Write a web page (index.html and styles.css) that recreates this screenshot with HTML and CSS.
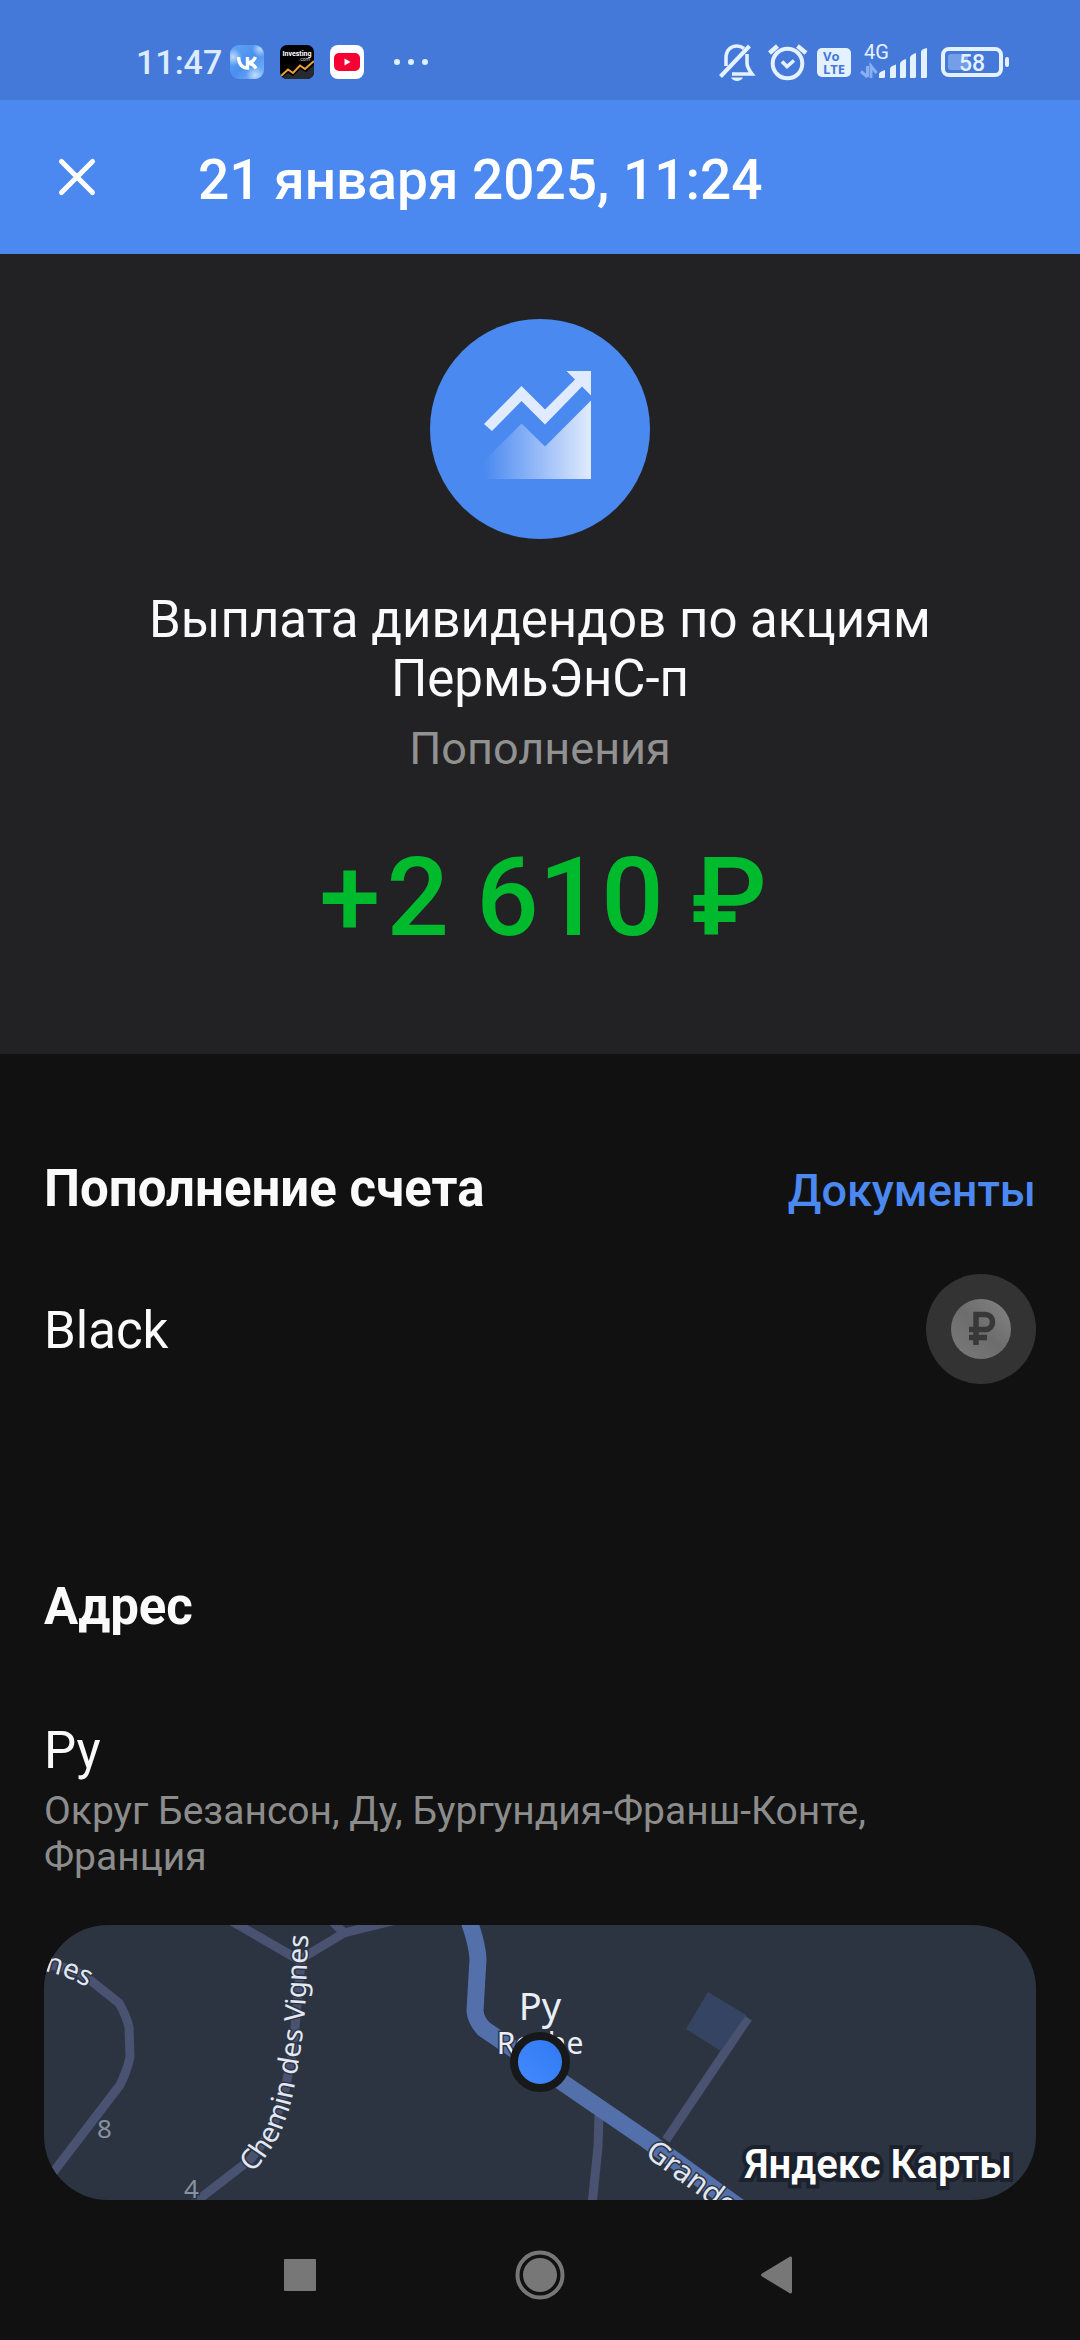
FILE: index.html
```html
<!DOCTYPE html>
<html lang="ru">
<head>
<meta charset="utf-8">
<meta name="viewport" content="width=device-width, initial-scale=1">
<title>Выплата дивидендов</title>
<link rel="stylesheet" href="styles.css">
</head>
<body>
<div class="status">
  <div class="status-left">
    <span class="clock">11:47</span>
    <svg class="app-icon" width="34" height="34" viewBox="0 0 34 34" aria-label="VK">
      <defs>
        <linearGradient id="sky" x1="0" y1="0" x2="1" y2="1"><stop offset="0" stop-color="#62a6f5"/><stop offset=".5" stop-color="#4a8fee"/><stop offset="1" stop-color="#7db8fa"/></linearGradient>
        <radialGradient id="cloud"><stop offset="0" stop-color="#d5e9ff" stop-opacity=".8"/><stop offset="1" stop-color="#d5e9ff" stop-opacity="0"/></radialGradient>
        <clipPath id="vkClip"><rect width="34" height="34" rx="9"/></clipPath>
      </defs>
      <g clip-path="url(#vkClip)">
        <rect width="34" height="34" fill="url(#sky)"/>
        <circle cx="3" cy="12" r="9" fill="url(#cloud)"/>
        <circle cx="25" cy="30" r="9" fill="url(#cloud)"/>
        <circle cx="30" cy="4" r="8" fill="url(#cloud)"/>
      </g>
      <path d="M8.500 12C9 19 12 23 17.500 23V12M25.500 12C24 15.500 21.500 17.500 17.500 18C22 18.500 24.500 20.500 26 23.500" fill="none" stroke="#fff" stroke-width="3.400"/>
    </svg>
    <svg class="app-icon" width="34" height="34" viewBox="0 0 34 34" aria-label="Investing">
      <clipPath id="invClip"><rect width="34" height="34" rx="7"/></clipPath>
      <g clip-path="url(#invClip)">
        <rect width="34" height="34" fill="#000"/>
        <path d="M0 34L8 28L13 31L20 24L26 27L34 20V34Z" fill="#252b2e"/>
        <path d="M1 31L8 24.500L13 28L20 20.500L25 24L34 16" fill="none" stroke="#e9a13b" stroke-width="2"/>
      </g>
      <text class="inv-name" x="17" y="11" text-anchor="middle">Investing</text>
      <text class="inv-com" x="30" y="16" text-anchor="end">.com</text>
    </svg>
    <svg class="app-icon" width="34" height="34" viewBox="0 0 34 34" aria-label="YouTube">
      <rect width="34" height="34" rx="8" fill="#fff"/><rect x="4" y="8" width="26" height="18" rx="5" fill="#f60033"/><path d="M14.500 13.500V20.500L20.500 17Z" fill="#fff"/>
    </svg>
    <svg class="more" width="34" height="8" viewBox="0 0 34 8"><g fill="#dcf0ff"><circle cx="3" cy="4" r="3"/><circle cx="17" cy="4" r="3"/><circle cx="31" cy="4" r="3"/></g></svg>
  </div>
  <svg class="status-right" width="292" height="40" viewBox="718 42 292 40" aria-label="4G, 58%">
    <g fill="none" stroke="#e4f1ff" stroke-width="3.600">
      <path d="M726 66V58C726 50 731 46 737 46C739.500 46 742 47 744 48.500"/>
      <path d="M747 54V63C747 67 749 70 752 74H732"/>
      <path d="M749.500 46L720.500 76.500" stroke-width="4"/>
      <circle cx="787.500" cy="63.500" r="14.800" stroke-width="4"/>
      <path d="M782 61.500L787 66.500L794 60.500"/>
      <path d="M769.500 53L777.500 46M806 53L797.500 46" stroke-width="4.400"/>
      <rect x="943" y="49" width="58" height="26" rx="6" stroke-width="4"/>
    </g>
    <path d="M731 77.500H743C741 82 733 82 731 77.500Z" fill="#e4f1ff"/>
    <rect x="817" y="48" width="34" height="29" rx="5" fill="#e4f1ff"/>
    <text class="volte" x="823" y="61">Vo</text>
    <text class="volte" x="823" y="74">LTE</text>
    <text class="net" x="864" y="59">4G</text>
    <path d="M867.500 66V77M861 71.500L867.500 77M871 78V66L876.500 73" fill="none" stroke="#88aff0" stroke-width="3"/>
    <g fill="#e4f1ff">
      <path d="M879 78V74Q879 72 885 70V77Q885 78 883.500 78Z"/>
      <path d="M890 78V68.500Q890 66.500 896 64.500V76.500Q896 78 894.500 78Z"/>
      <path d="M900 78V64Q900 61 906 59V76.500Q906 78 904.500 78Z"/>
      <path d="M910 78V58Q910 55 916 53V76.500Q916 78 914.500 78Z"/>
      <path d="M921 78V52Q921 49 927 48V76.500Q927 78 925.500 78Z"/>
      <rect x="1005" y="57" width="4" height="10" rx="2"/>
    </g>
    <rect x="948" y="54" width="20" height="16" rx="3" fill="#759ee9"/>
    <text class="charge" x="972" y="71" text-anchor="middle">58</text>
  </svg>
</div>

<header class="topbar">
  <button class="close" aria-label="Закрыть"><svg width="40" height="40" viewBox="0 0 40 40"><path d="M4.500 4.500L35.500 35.500M35.500 4.500L4.500 35.500" stroke="#fff" stroke-width="5" stroke-linecap="round"/></svg></button>
  <h1 class="date">21 января 2025, 11:24</h1>
</header>

<section class="hero">
  <svg class="logo" width="220" height="220" viewBox="430 319 220 220">
    <defs><linearGradient id="fade" x1="0" x2="1" y1="0" y2="0"><stop offset="0" stop-color="#e1ebff" stop-opacity="0"/><stop offset="1" stop-color="#e1ebff"/></linearGradient></defs>
    <circle cx="540" cy="429" r="110" fill="#4a89f0"/>
    <path d="M484 424L521.500 386L545 409.500L575 379.500L566.500 371H591V395.500L582 386.500L545 424.500L521.500 401L492 431Z" fill="#e1ebff"/>
    <path d="M484 461L521.500 423.500L545 446.500L591 400.500V479H484Z" fill="url(#fade)"/>
  </svg>
  <h2 class="operation">Выплата дивидендов по акциям ПермьЭнС-п</h2>
  <p class="category">Пополнения</p>
  <p class="amount"><span class="sign">+</span>2&nbsp;610&nbsp;₽</p>
</section>

<main class="details">
  <section>
    <div class="section-head">
      <h3 class="section-title">Пополнение счета</h3>
      <a class="docs" href="#documents">Документы</a>
    </div>
    <div class="account">
      <span class="row-title account-name">Black</span>
      <svg width="110" height="110" viewBox="0 0 110 110" aria-label="Рублёвый счёт">
        <defs><linearGradient id="coin" x1="0" y1="1" x2="1" y2="0"><stop offset="0" stop-color="#7a7a7a"/><stop offset=".5" stop-color="#6d6d6d"/><stop offset="1" stop-color="#848484"/></linearGradient></defs>
        <circle cx="55" cy="55" r="55" fill="#333"/><circle cx="55" cy="55" r="30" fill="url(#coin)"/>
        <path d="M50 71V40.500H59C63.500 40.500 66.500 43.500 66.500 48C66.500 52.500 63.500 55.500 59 55.500H43M43 63.500H61" fill="none" stroke="#383838" stroke-width="5.500"/>
      </svg>
    </div>
  </section>
  <section class="address">
    <h3 class="section-title">Адрес</h3>
    <p class="row-title place">Ру</p>
    <p class="place-detail">Округ Безансон, Ду, Бургундия-Франш-Конте, Франция</p>
    <div class="map">
      <svg class="map-canvas" viewBox="0 0 992 275" preserveAspectRatio="xMidYMid slice">
        <defs>
          <path id="pathChemin" d="M208 248C231 224 243 198 249 168S260 105 261.500 75L265 -5"/>
          <path id="pathGrande" d="M600 230L706 308"/>
          <path id="pathNes" d="M0 46Q21 50 47 64"/>
          <linearGradient id="dot" x1="0" y1="1" x2="1" y2="0"><stop offset="0" stop-color="#468bff"/><stop offset="1" stop-color="#2d78f0"/></linearGradient>
        </defs>
        <g class="road">
          <path d="M4 40Q30 42 46 55L75 78Q82 90 85 102L86 132Q83 146 76 160L-2 262"/>
          <path d="M184 -6L255 35L300 8L356 -6M286 -6L300 8"/>
          <path d="M257 36L253 80L249 125L241 165L228 205L207 234L150 278"/>
          <path d="M704 93L622 215M555 190L554 222L548 280"/>
        </g>
        <path class="plot" d="M664 67L702 90L677 126L642 104Z"/>
        <path class="main-road" d="M425 -4Q433 18 434 34L431 86Q432 96 440 104L496 142L604 216L706 290"/>
        <g class="street">
          <text><textPath href="#pathChemin">Chemin des Vignes</textPath></text>
          <text class="street-main"><textPath href="#pathGrande">Grande</textPath></text>
          <text><textPath href="#pathNes">nes</textPath></text>
        </g>
        <text class="house" x="53" y="213">8</text>
        <text class="house" x="140" y="273">4</text>
        <text class="town" x="496" y="95" text-anchor="middle">Ру</text>
        <text class="town-small" x="496" y="129" text-anchor="middle">Roche</text>
        <circle cx="496" cy="137" r="26" fill="url(#dot)" stroke="#17181a" stroke-width="8"/>
      </svg>
      <a class="map-brand" href="#map">Яндекс Карты</a>
    </div>
  </section>
</main>

<nav class="sysnav">
  <button aria-label="Недавние"><svg width="50" height="50" viewBox="0 0 50 50"><rect x="9" y="9" width="32" height="32" rx="1" fill="#777"/></svg></button>
  <button aria-label="Домой"><svg width="50" height="50" viewBox="0 0 50 50"><circle cx="25" cy="25" r="22.500" fill="none" stroke="#777" stroke-width="4"/><circle cx="25" cy="25" r="17" fill="#777"/></svg></button>
  <button aria-label="Назад"><svg width="50" height="50" viewBox="0 0 50 50"><path d="M7.500 25L35.500 8V42Z" fill="#777" stroke="#777" stroke-width="3" stroke-linejoin="round"/></svg></button>
</nav>
</body>
</html>
```
FILE: styles.css
```css
* { box-sizing: border-box; margin: 0; padding: 0; }
body {
  min-height: 100vh;
  display: flex;
  flex-direction: column;
  background: #111;
  color: #fafafa;
  font-family: Roboto, "Liberation Sans", sans-serif;
}
button { border: 0; background: none; display: flex; align-items: center; justify-content: center; cursor: pointer; }
a { text-decoration: none; }
svg { display: block; flex: none; }
h1, h2, h3 { font-weight: 400; }

/* Status bar */
.status {
  height: 100px;
  padding: 24px 70px 0 136px;
  display: flex;
  align-items: center;
  justify-content: space-between;
  background: #4479da;
}
.status-left { display: flex; align-items: center; gap: 16px; }
.clock { font-size: 34px; line-height: 40px; font-weight: 500; color: #dcebff; margin-right: -8px; }
.more { margin-left: 14px; }
.inv-name { font: 700 7px Roboto, sans-serif; fill: #fff; }
.inv-com { font: 400 5px Roboto, sans-serif; fill: #ddd; }
.volte { font: 700 13px "Open Sans", sans-serif; fill: #4479da; }
.net { font: 400 20px Roboto, sans-serif; fill: #e4f1ff; }
.charge { font: 500 23px Roboto, sans-serif; fill: #e4f1ff; }
.status-right { overflow: visible; }

/* Title bar */
.topbar { height: 154px; padding: 0 40px; display: flex; align-items: center; gap: 84px; background: #4b89f0; }
.close { width: 74px; height: 74px; }
.date { padding-top: 6px; font-size: 55px; line-height: 64px; font-weight: 500; color: #fff; }

/* Operation summary */
.hero {
  padding: 65px 120px 92px;
  display: flex;
  flex-direction: column;
  align-items: center;
  text-align: center;
  background: #222224;
}
.operation { margin-top: 51px; font-size: 51px; line-height: 59px; }
.category { margin-top: 14px; font-size: 45px; line-height: 54px; color: #919191; }
.amount { margin-top: 58px; font-size: 110px; line-height: 128px; font-weight: 500; color: #00ba2d; }
.sign { margin: 0 6px; }

/* Details */
.details { flex: 1; padding: 105px 44px 0; }
.section-head { display: flex; justify-content: space-between; align-items: baseline; }
.section-title { font-size: 51px; line-height: 60px; font-weight: 700; }
.docs { font-size: 45px; line-height: 56px; font-weight: 500; color: #4b89f0; }
.account { margin-top: 55px; display: flex; justify-content: space-between; align-items: center; }
.row-title { font-size: 51px; line-height: 60px; }
.account-name { padding-top: 4px; }
.address { margin-top: 193px; }
.place { margin-top: 84px; }
.place-detail { margin-top: 7px; padding-right: 44px; font-size: 39px; line-height: 46px; color: #8c8c8c; }

/* Map */
.map { position: relative; margin-top: 45px; height: 275px; border-radius: 64px; overflow: hidden; background: #2c3442; }
.map-canvas { width: 100%; height: 100%; }
.road { fill: none; stroke: #4a5272; stroke-width: 9; stroke-linejoin: round; }
.main-road { fill: none; stroke: #5470ab; stroke-width: 17; stroke-linejoin: round; }
.plot { fill: #354462; }
.street, .house, .town, .town-small { font-family: "Noto Sans", sans-serif; paint-order: stroke; stroke: #2c3442; stroke-width: 3px; }
.street { font-size: 28px; fill: #e2e8f2; }
.street-main { font-size: 30px; }
.house { font-size: 26px; fill: #8792a0; }
.town { font-size: 38px; fill: #e9eef7; }
.town-small { font-size: 30px; fill: #e9eef7; }
.map-brand {
  position: absolute;
  right: 24px;
  bottom: 10px;
  font-size: 40px;
  line-height: 50px;
  font-weight: 600;
  color: #fff;
  -webkit-text-stroke: 8px #1b222e;
  paint-order: stroke fill;
}

/* System navigation */
.sysnav { height: 140px; padding-top: 10px; display: flex; justify-content: center; align-items: center; gap: 160px; }
.sysnav button { width: 80px; height: 80px; }
```
